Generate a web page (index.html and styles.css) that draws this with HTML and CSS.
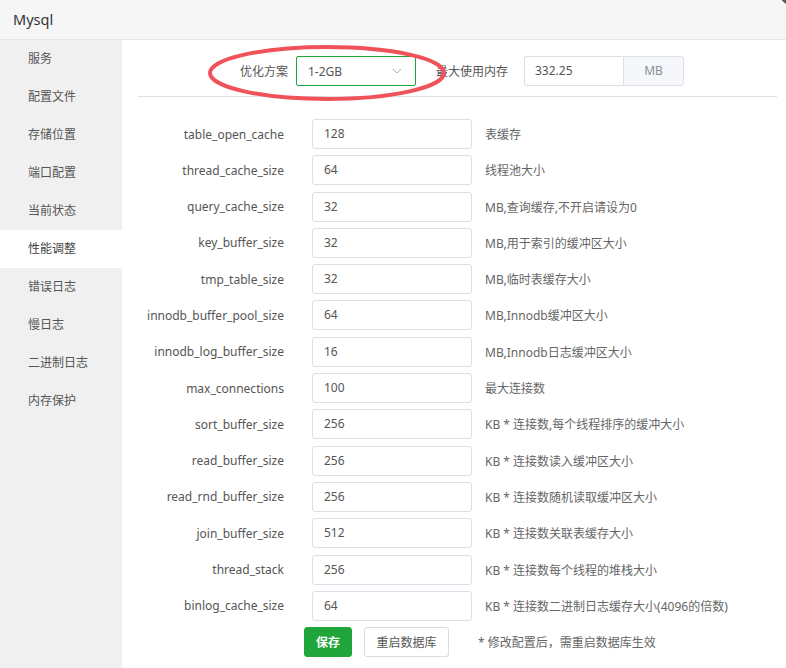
FILE: index.html
```html
<!DOCTYPE html>
<html lang="zh">
<head>
<meta charset="utf-8">
<title>Mysql</title>
<link rel="stylesheet" href="styles.css">
</head>
<body>
<div class="window">
  <div class="titlebar">Mysql</div>
  <span class="close-btn"></span>
  <div class="main">
    <ul class="sidebar">
      <li>服务</li>
      <li>配置文件</li>
      <li>存储位置</li>
      <li>端口配置</li>
      <li>当前状态</li>
      <li class="active">性能调整</li>
      <li>错误日志</li>
      <li>慢日志</li>
      <li>二进制日志</li>
      <li>内存保护</li>
    </ul>
    <div class="content">
      <div class="toprow">
        <span class="toplabel">优化方案</span>
        <div class="select"><span>1-2GB</span>
          <svg class="chev" width="10" height="6" viewBox="0 0 10 6"><path d="M1 1 L5 5 L9 1" fill="none" stroke="#b0b0b0" stroke-width="1"/></svg>
        </div>
        <span class="toplabel mem">最大使用内存</span>
        <div class="group"><span class="gval">332.25</span><span class="addon">MB</span></div>
        <svg class="ellipse" width="250" height="62" viewBox="0 0 250 62"><ellipse cx="125" cy="31" rx="117" ry="26" fill="none" stroke="#f0525a" stroke-width="4"/></svg>
      </div>
      <div class="divider"></div>
      <div class="form">
        <div class="row"><label>table_open_cache</label><div class="inp">128</div><span class="desc">表缓存</span></div>
        <div class="row"><label>thread_cache_size</label><div class="inp">64</div><span class="desc">线程池大小</span></div>
        <div class="row"><label>query_cache_size</label><div class="inp">32</div><span class="desc">MB,查询缓存,不开启请设为0</span></div>
        <div class="row"><label>key_buffer_size</label><div class="inp">32</div><span class="desc">MB,用于索引的缓冲区大小</span></div>
        <div class="row"><label>tmp_table_size</label><div class="inp">32</div><span class="desc">MB,临时表缓存大小</span></div>
        <div class="row"><label>innodb_buffer_pool_size</label><div class="inp">64</div><span class="desc">MB,Innodb缓冲区大小</span></div>
        <div class="row"><label>innodb_log_buffer_size</label><div class="inp">16</div><span class="desc">MB,Innodb日志缓冲区大小</span></div>
        <div class="row"><label>max_connections</label><div class="inp">100</div><span class="desc">最大连接数</span></div>
        <div class="row"><label>sort_buffer_size</label><div class="inp">256</div><span class="desc">KB * 连接数,每个线程排序的缓冲大小</span></div>
        <div class="row"><label>read_buffer_size</label><div class="inp">256</div><span class="desc">KB * 连接数读入缓冲区大小</span></div>
        <div class="row"><label>read_rnd_buffer_size</label><div class="inp">256</div><span class="desc">KB * 连接数随机读取缓冲区大小</span></div>
        <div class="row"><label>join_buffer_size</label><div class="inp">512</div><span class="desc">KB * 连接数关联表缓存大小</span></div>
        <div class="row"><label>thread_stack</label><div class="inp">256</div><span class="desc">KB * 连接数每个线程的堆栈大小</span></div>
        <div class="row"><label>binlog_cache_size</label><div class="inp">64</div><span class="desc">KB * 连接数二进制日志缓存大小(4096的倍数)</span></div>
        <div class="btnrow">
          <button class="btn btn-green">保存</button>
          <button class="btn btn-default">重启数据库</button>
          <span class="note">* 修改配置后，需重启数据库生效</span>
        </div>
      </div>
    </div>
  </div>
</div>
</body>
</html>
```
FILE: styles.css
```css
* { box-sizing: border-box; }
html, body { margin: 0; padding: 0; background: #fff; }
body {
  font-family: "Noto Sans", "Noto Sans CJK SC", sans-serif;
  font-size: 12px;
  color: #555;
  width: 786px;
  height: 668px;
  overflow: hidden;
}
.window { position: relative; width: 786px; height: 668px; overflow: hidden; }
.titlebar {
  height: 40px;
  background: #f6f6f6;
  border-bottom: 1px solid #e6e6e6;
  padding-left: 13px;
  line-height: 38px;
  font-size: 14.5px;
  color: #333;
}
.close-btn {
  position: absolute;
  right: -26px;
  top: -28px;
  width: 36px;
  height: 36px;
  border-radius: 50%;
  background: #5a5a5a;
  border: 2px solid #fff;
}
.main { display: flex; height: 628px; }
.sidebar {
  list-style: none;
  margin: 0;
  padding: 0;
  width: 122px;
  flex: none;
  background: #f0f0f0;
}
.sidebar li {
  height: 38px;
  line-height: 38px;
  padding-left: 28px;
  color: #555;
}
.sidebar li.active { background: #fff; color: #444; }
.content { flex: 1; padding: 16px 9px 0 16px; }
.toprow {
  position: relative;
  display: flex;
  align-items: center;
  height: 30px;
  padding-left: 102px;
}
.toplabel { color: #555; width: 48px; margin-right: 8px; white-space: nowrap; }
.toplabel.mem { width: 72px; margin-left: 20px; margin-right: 16px; }
.select {
  width: 120px;
  height: 30px;
  border: 1px solid #20a53a;
  border-radius: 2px;
  display: flex;
  align-items: center;
  justify-content: space-between;
  padding: 0 13px 0 11px;
  color: #555;
}
.group { display: flex; height: 30px; }
.gval {
  width: 99px;
  border: 1px solid #dcdfe6;
  border-right: none;
  border-radius: 3px 0 0 3px;
  padding-left: 10px;
  line-height: 28px;
  color: #555;
}
.addon {
  width: 61px;
  border: 1px solid #dcdfe6;
  border-radius: 0 3px 3px 0;
  background: #f5f7fa;
  text-align: center;
  line-height: 28px;
  color: #8a8f99;
}
.ellipse { position: absolute; left: 64px; top: -14px; pointer-events: none; }
.divider { height: 1px; background: #dfdfe3; margin-top: 10px; }
.form { padding-top: 22px; }
.row {
  display: flex;
  align-items: center;
  height: 30px;
  margin-bottom: 6.3px;
}
.row label {
  width: 146px;
  text-align: right;
  margin-right: 28px;
  color: #555;
  white-space: nowrap;
}
.inp {
  width: 160px;
  height: 30px;
  border: 1px solid #dcdfe6;
  border-radius: 3px;
  padding-left: 11px;
  line-height: 28px;
  color: #555;
}
.desc { margin-left: 13px; color: #666; white-space: nowrap; }
.btnrow { display: flex; align-items: center; padding-left: 166px; margin-top: 5px; }
.btn {
  height: 30px;
  font-family: inherit;
  font-size: 12px;
  border-radius: 3px;
  padding: 0;
  cursor: pointer;
}
.btn-green { background: #20a53a; border: 1px solid #20a53a; color: #fff; width: 48px; font-weight: bold; }
.btn-default { background: #fff; border: 1px solid #dcdcdc; color: #555; margin-left: 12px; width: 85px; }
.note { margin-left: 29px; color: #666; }
```
